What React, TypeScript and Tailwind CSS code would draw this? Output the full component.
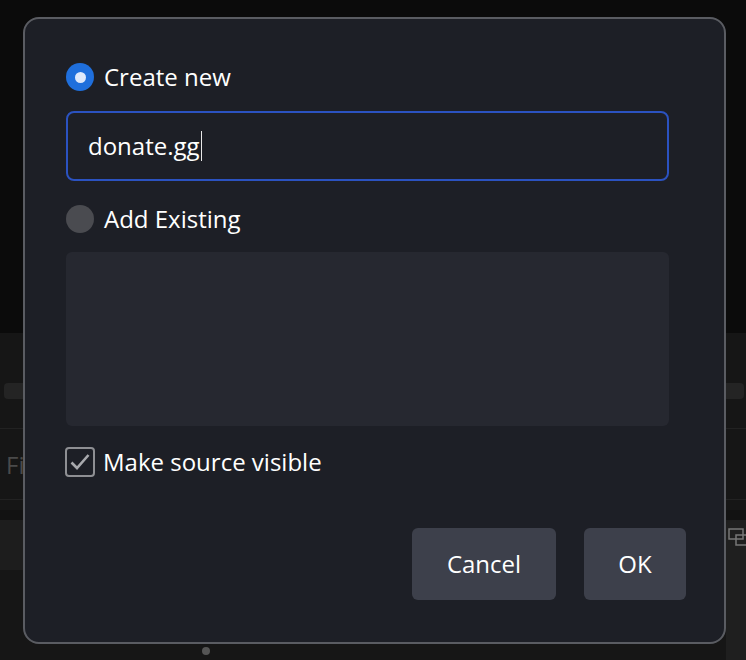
export default function App() {
  return (
    <div
      className="relative h-[660px] w-[746px] overflow-hidden bg-[#0b0b0b]"
      style={{ fontFamily: '"Open Sans", "Noto Sans", sans-serif' }}
    >
      {/* app behind the dialog */}
      <div className="absolute left-0 top-[333px] h-[327px] w-full bg-[#161616]">
        <div className="absolute left-[4px] top-[50px] h-[16px] w-[740px] rounded bg-[#242424]" />
        <div className="absolute left-0 top-[95px] h-px w-full bg-[#222]" />
        <div className="absolute left-[6px] top-[114px] text-[24px] text-[#4a4a4a]">Fi</div>
        <div className="absolute left-0 top-[166px] h-px w-full bg-[#222]" />
        <div className="absolute left-0 top-[177px] h-[10px] w-full bg-[#121212]" />
        <div className="absolute left-0 top-[187px] h-[50px] w-full bg-[#1d1d1d]" />
        <div className="absolute right-0 top-[187px] h-[140px] w-[20px] rounded-tl-md bg-[#1f1f1f]">
          <svg width="20" height="30" viewBox="0 0 20 30" className="absolute left-[2px] top-[8px]">
            <rect x="1" y="1" width="14" height="10" fill="none" stroke="#777" strokeWidth="1.5" />
            <rect x="8" y="7" width="14" height="10" fill="none" stroke="#777" strokeWidth="1.5" />
          </svg>
        </div>
        <div className="absolute left-[202px] top-[314px] h-[8px] w-[8px] rounded-full bg-[#555]" />
      </div>

      {/* dialog */}
      <div className="absolute left-[23px] top-[17px] flex h-[627px] w-[703px] flex-col rounded-[16px] border-2 border-[#5a5c62] bg-[#1d1f26] pl-[41px] pr-[55px] pt-[42px] text-[24px] text-white">
        <label className="flex h-[32px] items-center gap-[10px]">
          <span className="flex h-[28px] w-[28px] items-center justify-center rounded-full bg-[#1f6fdc]">
            <span className="h-[11px] w-[11px] rounded-full bg-[#dfe9fb]" />
          </span>
          <span>Create new</span>
        </label>

        <div className="mt-[18px] flex h-[70px] items-center rounded-[8px] border-2 border-[#2b52c0] bg-[#1d1f26] px-[20px]">
          <span>donate.gg</span>
          <span className="ml-px h-[30px] w-[1.5px] bg-[#e8e8e8]" />
        </div>

        <label className="mt-[22px] flex h-[32px] items-center gap-[10px]">
          <span className="h-[28px] w-[28px] rounded-full bg-[#4a4b50]" />
          <span>Add Existing</span>
        </label>

        <div className="mt-[17px] h-[174px] rounded-[6px] bg-[#262830]" />

        <label className="mt-[20px] flex h-[32px] items-center gap-[8px]">
          <span className="-ml-px flex h-[30px] w-[30px] items-center justify-center rounded-[4px] border-2 border-[#8e8f93]">
            <svg width="24" height="24" viewBox="0 0 24 24">
              <path d="M3.5 12.5 L9 18 L20.5 5" fill="none" stroke="#a8a9ad" strokeWidth="2.6" />
            </svg>
          </span>
          <span>Make source visible</span>
        </label>

        <div className="-mr-[17px] mt-[50px] flex justify-end gap-[28px]">
          <button className="h-[72px] w-[144px] rounded-[6px] bg-[#3d404b] text-white">Cancel</button>
          <button className="h-[72px] w-[102px] rounded-[6px] bg-[#3d404b] text-white">OK</button>
        </div>
      </div>
    </div>
  );
}
